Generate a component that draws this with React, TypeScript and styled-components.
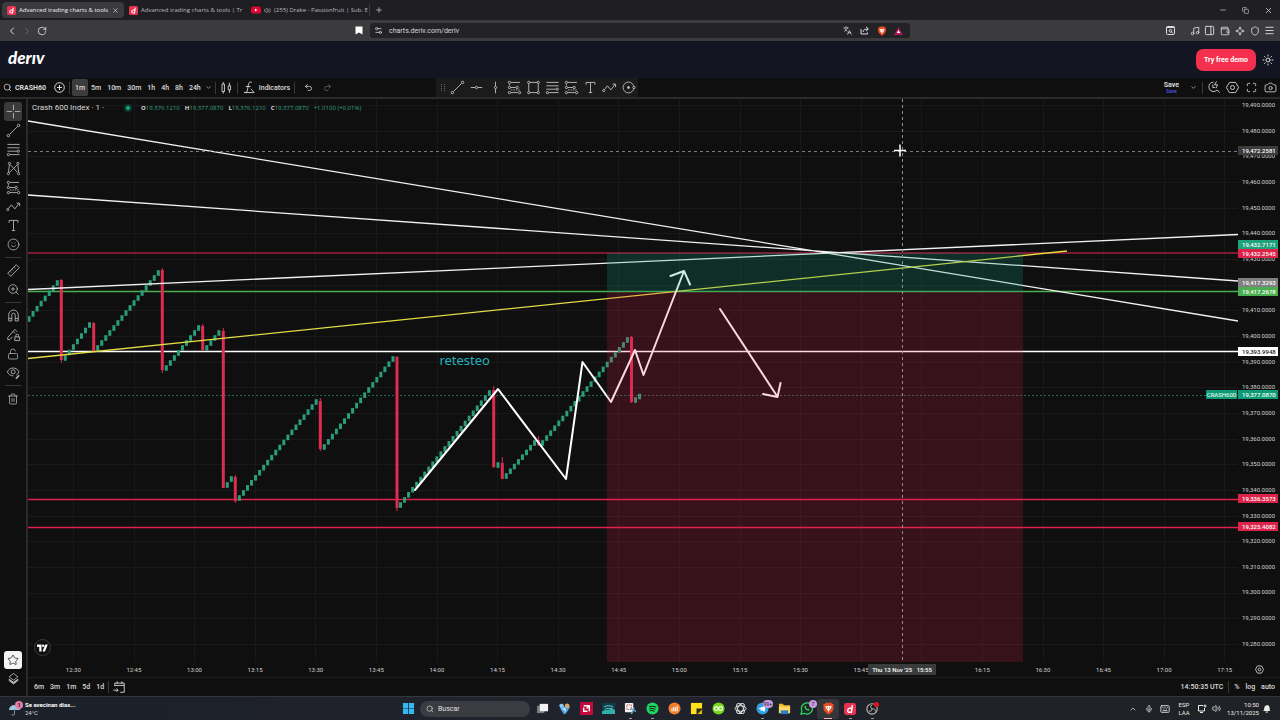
import React from 'react';
import styled, { createGlobalStyle, css } from 'styled-components';
import {
  ChevronDown, ChevronLeft, ChevronRight, ChevronUp, Copy, Keyboard, Languages, Menu, Mic, Minus,
  Music, PanelRight, Plus, Redo2, RotateCw, Search, Settings2, Smile, Sparkle, Sun, Trash2, Undo2,
  Volume2, Wallet, X, Camera, Maximize, ZoomIn, Star, Shield, LockOpen,
} from 'lucide-react';

const GlobalStyle = createGlobalStyle`
  * { box-sizing: border-box; }
  body { margin: 0; background: #0f0f0f; }
  button, input { font: inherit; color: inherit; }
  button { border: 0; padding: 0; background: none; cursor: pointer; }
`;

const Page = styled.div`
  display: flex;
  flex-direction: column;
  min-height: 100vh;
  font-family: Roboto, 'Noto Sans', sans-serif;
  font-size: 7px;
  line-height: 10px;
  color: #dbdbdb;
  background: #0f0f0f;
`;

/* ---------- shared parts ---------- */

const IconButton = styled.button<{ $w?: number; $dim?: boolean }>`
  display: flex;
  align-items: center;
  justify-content: center;
  flex: none;
  width: ${(p) => p.$w ?? 15}px;
  height: 15px;
  color: ${(p) => (p.$dim ? '#6b6b6e' : 'inherit')};
`;

const VRule = styled.span<{ $m?: number }>`
  flex: none;
  width: 1px;
  height: 12px;
  margin: 0 ${(p) => p.$m ?? 4}px;
  background: #3a3a3c;
`;

const Spacer = styled.span`
  flex: 1;
`;

const Glyph = styled.svg.attrs({
  viewBox: '0 0 28 28', width: 19, height: 19, fill: 'none', stroke: 'currentColor', strokeWidth: 1.3,
})`
  display: block;
  flex: none;
`;

/* ---------- browser tabs ---------- */

const TabStrip = styled.div`
  display: flex;
  align-items: center;
  height: 20px;
  padding-left: 2px;
  font-family: 'Open Sans', sans-serif;
  font-size: 6px;
  background: #1f1e23;
`;

const Tab = styled.div<{ $active?: boolean }>`
  display: flex;
  align-items: center;
  gap: 3px;
  width: 122px;
  height: 16px;
  padding: 0 5px;
  border-radius: 4px;
  color: ${(p) => (p.$active ? '#f0f0f0' : '#b9b8bc')};
  background: ${(p) => (p.$active ? '#3b3a3e' : 'transparent')};
`;

const TabTitle = styled.span`
  flex: 1;
  min-width: 0;
  white-space: nowrap;
`;

const WindowButtons = styled.div`
  display: flex;
  margin-left: auto;
`;

/* ---------- address row ---------- */

const NavRow = styled.div`
  display: grid;
  grid-template-columns: 1fr minmax(0, 540px) 1fr;
  align-items: center;
  height: 21px;
  background: #3b3a3d;
  color: #dddddf;
`;

const NavSide = styled.div<{ $end?: boolean }>`
  display: flex;
  align-items: center;
  padding: 0 4px;
  ${(p) => p.$end && css`justify-content: flex-end; padding: 0 3px;`}
`;

const AddressBar = styled.div`
  display: flex;
  align-items: center;
  gap: 2px;
  height: 15px;
  padding: 0 4px;
  border-radius: 3px;
  background: #232227;
`;

const AddressInput = styled.input`
  flex: 1;
  min-width: 0;
  padding: 0 4px;
  border: 0;
  outline: 0;
  background: none;
  color: #d6d6d8;
`;

/* ---------- site header ---------- */

const SiteHeader = styled.header`
  display: flex;
  align-items: center;
  height: 37px;
  padding: 0 5px 0 8px;
  background: #131622;
`;

const Logo = styled.a`
  padding-bottom: 3px;
  font-family: Lato, 'Open Sans', sans-serif;
  font-size: 17px;
  line-height: 20px;
  font-weight: 900;
  font-style: italic;
  color: #fff;
  text-decoration: none;
`;

const DemoButton = styled.button`
  height: 22px;
  width: 60px;
  margin: 0 4px 0 auto;
  border-radius: 7px;
  background: #f5304f;
  color: #fff;
  font-weight: 700;
`;

/* ---------- chart toolbar ---------- */

const Toolbar = styled.div`
  display: flex;
  align-items: center;
  height: 21px;
  border-bottom: 2px solid #2b2b2b;
  background: #0f0f0f;
`;

const ToolbarMain = styled.div`
  display: flex;
  align-items: center;
  flex: none;
  width: 436px;
  padding-left: 3px;
`;

const SymbolButton = styled.button`
  display: flex;
  align-items: center;
  gap: 3px;
  width: 49px;
  font-weight: 700;
`;

const FrameButton = styled.button<{ $active?: boolean }>`
  height: 17px;
  padding: 0 3px;
  border-radius: 2px;
  font-weight: 500;
  background: ${(p) => (p.$active ? '#3d3d3d' : 'transparent')};
`;

const IndicatorsButton = styled.button`
  display: flex;
  align-items: center;
  font-weight: 500;
`;

const Favorites = styled.div`
  display: flex;
  align-items: center;
  height: 19px;
  padding-left: 2px;
  background: #1b1b1b;
  color: #c4c4c4;
`;

const SaveButton = styled.button`
  display: flex;
  flex-direction: column;
  align-items: center;
  margin-right: 7px;
  line-height: 7px;
  font-weight: 700;
  small { font-size: 5px; line-height: 5px; color: #4a49d8; }
`;

/* ---------- workspace ---------- */

const Workspace = styled.div`
  display: flex;
  flex: 1;
`;

const DrawTools = styled.nav`
  display: flex;
  flex-direction: column;
  align-items: center;
  flex: none;
  width: 28px;
  padding: 3px 0 8px;
  border-right: 2px solid #2b2b2b;
  color: #b8b8b8;
`;

const ToolButton = styled.button<{ $active?: boolean; $light?: boolean }>`
  display: flex;
  align-items: center;
  justify-content: center;
  flex: none;
  width: 18px;
  height: 19px;
  border-radius: 3px;
  ${(p) => p.$active && css`background: #3a3a3a;`}
  ${(p) => p.$light && css`background: #f4f4f4; color: #222; height: 18px;`}
`;

const HRule = styled.span`
  flex: none;
  width: 17px;
  height: 1px;
  margin: 3px 0;
  background: #363636;
`;

const ChartColumn = styled.main`
  display: flex;
  flex-direction: column;
  flex: 1;
  min-width: 0;
`;

const PlotRow = styled.div`
  display: flex;
  flex: 1;
  min-height: 563px;
`;

const Plot = styled.section`
  position: relative;
  flex: 1;
  min-width: 0;
`;

const PlotSvg = styled.svg`
  position: absolute;
  inset: 0;
  width: 100%;
  height: 100%;
`;

const Legend = styled.div`
  position: relative;
  display: flex;
  align-items: center;
  height: 18px;
  padding-left: 4px;
  font-family: 'Open Sans', sans-serif;
  font-size: 6px;
  white-space: pre;
`;

const LegendTitle = styled.span`
  width: 92px;
  font-family: Roboto, sans-serif;
  font-size: 8px;
`;

const StatusDot = styled.span`
  width: 8px;
  height: 8px;
  margin-right: 9px;
  border: 2px solid #0c3a2c;
  border-radius: 50%;
  background: #17a67c;
`;

const Ohlc = styled.span`
  margin-right: 5px;
  color: #33a587;
  b { font-weight: 700; color: #dbdbdb; }
`;

const Note = styled.span`
  position: absolute;
  left: 34%;
  top: 251px;
  font-family: 'Noto Sans', sans-serif;
  font-size: 13px;
  line-height: 20px;
  color: #22b3bd;
`;

const TvBadge = styled.span`
  position: absolute;
  left: 6px;
  bottom: 6px;
  display: flex;
  align-items: center;
  justify-content: center;
  width: 17px;
  height: 17px;
  border: 1px solid #3b3b3b;
  border-radius: 50%;
  background: #0f0f0f;
`;

const PriceAxis = styled.aside`
  position: relative;
  display: flex;
  flex-direction: column;
  justify-content: space-between;
  flex: none;
  width: 42px;
  padding: 1px 5px 13px 4px;
  font-size: 6px;
  color: #cfcfcf;
`;

const PriceTag = styled.span<{ $at: number; $bg: string; $fg?: string }>`
  position: absolute;
  left: 0;
  top: ${(p) => (p.$at / 563) * 100}%;
  width: 40px;
  height: 9px;
  margin-top: -5px;
  padding-left: 4px;
  line-height: 9px;
  font-weight: 500;
  color: ${(p) => p.$fg ?? '#fff'};
  background: ${(p) => p.$bg};
`;

const SymbolTag = styled.span`
  position: absolute;
  right: 1px;
  top: ${(296 / 563) * 100}%;
  width: 31px;
  height: 9px;
  margin-top: -5px;
  text-align: center;
  font-size: 6px;
  line-height: 9px;
  color: #fff;
  background: #0f9a77;
`;

const TimeAxis = styled.div`
  position: relative;
  display: flex;
  align-items: center;
  height: 15px;
  padding-left: 15px;
  font-size: 6px;
  color: #cfcfcf;
`;

const TimeTicks = styled.div`
  display: grid;
  grid-template-columns: repeat(20, 1fr);
  flex: 1;
  text-align: center;
`;

const TimeTag = styled.span`
  position: absolute;
  left: ${(874 / 1252) * 100}%;
  top: 2px;
  width: 68px;
  height: 11px;
  margin-left: -34px;
  text-align: center;
  line-height: 11px;
  white-space: pre;
  font-weight: 500;
  color: #fff;
  background: #3a3c3b;
`;

const RangeBar = styled.div`
  display: flex;
  align-items: center;
  height: 19px;
  padding: 0 2px 0 3px;
  border-top: 1px solid #1d1d1d;
`;

const RangeButton = styled.button`
  padding: 0 3px;
  font-weight: 500;
`;

/* ---------- desktop taskbar ---------- */

const Taskbar = styled.footer`
  display: grid;
  grid-template-columns: 397px 1fr auto;
  align-items: center;
  height: 24px;
  border-top: 1px solid #34363b;
  background: linear-gradient(90deg, #1b2029, #20222c 40%, #1f2226);
`;

const Weather = styled.div`
  display: flex;
  align-items: center;
  gap: 2px;
  padding-left: 8px;
  font-size: 6px;
  line-height: 8px;
  b { display: block; color: #fff; font-weight: 700; }
`;

const Dock = styled.div`
  display: flex;
  align-items: center;
`;

const SearchBox = styled.label`
  display: flex;
  align-items: center;
  gap: 4px;
  width: 110px;
  height: 16px;
  margin: 0 1px;
  padding: 0 6px;
  border-radius: 8px;
  background: #3a3c42;
  input {
    width: 70px;
    padding: 0;
    border: 0;
    outline: 0;
    background: none;
  }
  input::placeholder { color: #e0e0e0; opacity: 1; }
`;

const AppButton = styled.button<{ $open?: boolean; $active?: boolean }>`
  position: relative;
  display: flex;
  align-items: center;
  justify-content: center;
  width: 22px;
  height: 20px;
  border-radius: 3px;
  background: ${(p) => (p.$active ? '#34363a' : 'none')};
  &::after {
    content: '';
    position: absolute;
    bottom: 0;
    width: ${(p) => (p.$active ? 8 : 3)}px;
    height: 1px;
    background: ${(p) => (p.$active ? '#f0b8b8' : p.$open ? '#9a9a9a' : 'transparent')};
  }
`;

const Badge = styled.span`
  position: absolute;
  top: 1px;
  right: 0;
  min-width: 8px;
  height: 8px;
  padding: 0 1px;
  border-radius: 4px;
  font-size: 5px;
  line-height: 8px;
  text-align: center;
  color: #222;
  background: #c79be0;
`;

const Tray = styled.div`
  display: flex;
  align-items: center;
  padding-right: 7px;
  font-size: 6px;
  line-height: 8px;
  color: #ececec;
`;

const TrayText = styled.span<{ $w: number; $end?: boolean }>`
  width: ${(p) => p.$w}px;
  text-align: ${(p) => (p.$end ? 'right' : 'center')};
`;

/* ---------- drawing-tool glyphs ---------- */

const Cross = () => <Glyph><path d="M14 4v8M14 16v8M4 14h8M16 14h8" /></Glyph>;
const TrendLine = () => (
  <Glyph><circle cx="6.5" cy="21.5" r="1.800" /><circle cx="21.5" cy="6.5" r="1.800" /><path d="M8 20L20 8" /></Glyph>
);
const HLine = () => <Glyph><circle cx="14" cy="14" r="1.7" /><path d="M5.500 14h6.500M16 14h6.500" /></Glyph>;
const VLine = () => <Glyph><circle cx="14" cy="14" r="1.7" /><path d="M14 5.500v6.500M14 16v6.500" /></Glyph>;
const Fib = () => (
  <Glyph>
    <path d="M5 6.500h18M5 11.500h18M5 16.500h14M8.500 21.500H23" /><circle cx="21" cy="16.500" r="1.700" /><circle cx="6.500" cy="21.500" r="1.700" />
  </Glyph>
);
const Pattern = () => (
  <Glyph>
    <path d="M6.500 20L8 8.500M9 8l10.500 11.500M8 20L19.500 8.500M20.500 9l1 10.500" />
    <circle cx="6.500" cy="21.500" r="1.600" /><circle cx="8" cy="6.500" r="1.600" /><circle cx="20.500" cy="6.500" r="1.600" /><circle cx="21.500" cy="21.500" r="1.600" />
  </Glyph>
);
const Position = () => (
  <Glyph>
    <path d="M8.500 6.500H22M8.500 14H16M8.500 21.500H19" /><path d="M6.500 9v3M9 17.700h13" strokeDasharray="2 1.500" />
    <circle cx="6.500" cy="6.500" r="1.700" /><circle cx="6.500" cy="14" r="1.700" /><circle cx="6.500" cy="21.500" r="1.700" />
    <circle cx="18" cy="14" r="1.700" /><circle cx="21.500" cy="21.500" r="1.700" />
  </Glyph>
);
const Rect = () => (
  <Glyph>
    <path d="M8.500 6.500h11M8.500 21.500h11M7 8.500v11M21 8.500v11" />
    <circle cx="7" cy="6.500" r="1.700" /><circle cx="21" cy="6.500" r="1.700" /><circle cx="7" cy="21.500" r="1.700" /><circle cx="21" cy="21.500" r="1.700" />
  </Glyph>
);
const ZigArrow = () => (
  <Glyph><circle cx="5.500" cy="18.500" r="1.600" /><path d="M6.500 17l4.500-5.500 5 6 6.500-8.500M18.500 9H23v4.500" /></Glyph>
);
const TextTool = () => <Glyph><path d="M7.500 10V6.500h13V10M14 6.500v15M11.500 21.500h5" /></Glyph>;
const TargetCircle = () => (
  <Glyph><circle cx="14" cy="14" r="8" /><circle cx="14" cy="14" r="1.500" fill="currentColor" /><circle cx="22" cy="14" r="1.700" fill="#1b1b1b" /></Glyph>
);
const RulerTool = () => (
  <Glyph><path d="M5.500 18L18 5.500l4.500 4.500L10 22.500zM8.500 15l2 2M11.500 12l2 2M14.500 9l2 2" /></Glyph>
);
const Magnet = () => (
  <Glyph><path d="M7 22V13a7 7 0 0114 0v9h-4.500v-9a2.500 2.500 0 00-5 0v9zM7 18.500h4.500M16.500 18.500H21" /></Glyph>
);
const PenLock = () => (
  <Glyph><path d="M5.500 18.500L16 6.500l3.500 3.500M5.500 18.500v3h3l4-4M13.500 9.500l3 3M16 17.500h7V23h-7zM17.500 17.500V15.500a2 2 0 014 0v2" /></Glyph>
);
const EyePen = () => (
  <Glyph>
    <path d="M5 13c3-7.500 14-7.500 17 0-1 2.500-2.500 4-4 4.800M5 13c1.500 4 5 6 9 6" /><circle cx="13.500" cy="13" r="3" />
    <path d="M17.500 23l5-5" strokeWidth={2.200} />
  </Glyph>
);
const Candles = () => (
  <Glyph><path d="M7.500 9H11v11H7.500zM9.300 6v3M9.300 20v3M16.500 11.500H20v6h-3.500zM18.300 7v4.500M18.300 17.500V22" /></Glyph>
);
const Fx = () => (
  <Glyph><path d="M17.500 6.500c-3-1.500-4.500 0-5 3l-1.500 8c-.500 3-2 4.500-4.500 3.500M8.500 12.500h7M6 21.500h15M16 16l4.500 5" /></Glyph>
);
const HexGear = () => <Glyph><path d="M9.500 6.500h9L23 14l-4.500 7.500h-9L5 14z" /><circle cx="14" cy="14" r="3" /></Glyph>;
const QuickSearch = () => (
  <Glyph><path d="M14 6a7 7 0 105.500 11.500L23 21.500M13 9.500v4.500h3M18.500 5l-3 5h4.500l-2.500 5" /></Glyph>
);
const CalendarGo = () => (
  <Glyph><path d="M7 12V7.500h14V21h-6M7 11h14M10.500 5v4M17.500 5v4M5 18h7M9.500 15.500L12 18l-2.500 2.500" /></Glyph>
);
const ObjectTree = () => (
  <Glyph><path d="M14 6.500l6.500 5-6.500 5-6.500-5z" /><path d="M7.500 15v2l6.500 5 6.500-5v-2L14 19.500z" fill="currentColor" /></Glyph>
);

/* ---------- brand marks ---------- */

const DerivMark = ({ size = 9 }: { size?: number }) => (
  <svg width={size} height={size} viewBox="0 0 14 14">
    <rect width="14" height="14" rx="2.500" fill="#e93152" />
    <path d="M9.800 2.500L8.600 10.800H6.200a1.900 1.900 0 01-1.900-2.300c.2-1.300 1.200-2.300 2.500-2.300h2.300" fill="none" stroke="#fff" strokeWidth="1.700" />
  </svg>
);
const TubeMark = () => (
  <svg width="10" height="8" viewBox="0 0 14 10"><rect width="14" height="10" rx="3" fill="#e0062f" /><path d="M5.500 3v4L9 5z" fill="#fff" /></svg>
);
const BraveMark = ({ size = 10 }: { size?: number }) => (
  <svg width={size} height={size} viewBox="0 0 14 14">
    <path d="M4 .8h6l1 1.400 1.600.3-.3 5.300c-.3 2-2.500 4-5.300 5.800C4.200 11.800 2 9.800 1.700 7.800L1.400 2.500 3 2.200z" fill="#e84b22" />
    <path d="M3.500 4l2 .5L7 4l1.500.5 2-.5-.8 3L8 9l-1 1.800L6 9 4.300 7z" fill="#fff" /><path d="M5.200 6l1.300.8M8.800 6l-1.300.8" stroke="#e84b22" />
  </svg>
);
const App14 = styled.svg.attrs({ viewBox: '0 0 14 14', width: 13, height: 13 })`
  display: block;
`;

const dockApps: { name: string; open?: boolean; active?: boolean; badge?: string; art: React.ReactNode }[] = [
  { name: 'Task view', art: <App14><rect x="1" y="4" width="8" height="8" fill="#77797d" /><rect x="4" y="2" width="9" height="8" fill="#f2f2f2" /></App14> },
  { name: 'Messenger', art: <App14><path d="M1 3l3-1 3 3 3-2 3 2-2 4-3 4H6L3 8z" fill="#4aa5e8" /><circle cx="9.800" cy="4" r="2.500" fill="#e2a35f" /><circle cx="4" cy="4" r="2.200" fill="#8ccaf0" /><path d="M4 7l4-1 1 5z" fill="#b9dcf4" /></App14> },
  { name: 'AMD Software', art: <App14><rect width="14" height="14" fill="#c4093c" /><path d="M4 4h6v6M10 4L7 7M4 6v4h4" stroke="#fff" strokeWidth="1.500" fill="none" /></App14> },
  { name: 'Wallpapers', art: <App14><rect y="1" width="14" height="12" fill="#0d3f4a" /><path d="M0 10c3-2 6-1 8-2s4-1 6 1v4H0z" fill="#2fb0aa" /><path d="M2 5.500c3-2 7-2 10 0M3 8c3-1.500 5-1 8-1" stroke="#7fd5cf" fill="none" /></App14> },
  { name: 'Snipping Tool', open: true, art: <App14><rect x="1" y="1" width="9" height="10" rx="1" fill="#f3f3f3" /><path d="M3 3h5v5H3z" fill="none" stroke="#c84a55" strokeDasharray="1.500 1" /><path d="M7 7l6 3M8 13l3-7" stroke="#67a8cf" strokeWidth="1.500" /></App14> },
  { name: 'Spotify', open: true, art: <App14><circle cx="7" cy="7" r="6.500" fill="#1ed760" /><path d="M3.200 5c3-.9 5.800-.5 7.800.7M3.600 7.300c2.400-.7 4.700-.4 6.600.7M4 9.400c2-.5 3.800-.2 5.300.7" stroke="#15231a" strokeWidth="1.100" fill="none" /></App14> },
  { name: 'Audio mixer', art: <App14><circle cx="7" cy="7" r="6.500" fill="#f07f2c" /><path d="M4.300 10V7M6.200 10V5.500M8.100 10V6M10 10V4" stroke="#fff" strokeWidth="1.200" /></App14> },
  { name: 'Sticky Notes', art: <App14><path d="M1 1h12v12H1z" fill="#ffe21c" /><path d="M13 7H7v6h6z" fill="#2b2a1c" /><path d="M8 13l5-5v5z" fill="#d9b40e" /></App14> },
  { name: 'Owl', art: <App14><circle cx="7" cy="7" r="6.500" fill="#74d81f" /><circle cx="4.700" cy="7" r="2" fill="none" stroke="#fff" strokeWidth="1.200" /><circle cx="9.300" cy="7" r="2" fill="none" stroke="#fff" strokeWidth="1.200" /></App14> },
  { name: 'ChatGPT', art: <App14><g fill="none" stroke="#e8e8e8" strokeWidth="1"><ellipse cx="7" cy="7" rx="6" ry="3" /><ellipse cx="7" cy="7" rx="6" ry="3" transform="rotate(60 7 7)" /><ellipse cx="7" cy="7" rx="6" ry="3" transform="rotate(120 7 7)" /></g></App14> },
  { name: 'Telegram', open: true, badge: '99+', art: <App14><circle cx="7" cy="7" r="6.500" fill="#2f9fe0" /><path d="M2.500 7l8-3.300-1.300 7-2.500-1.800-1.400 1.200-.3-2.200z" fill="#fff" /></App14> },
  { name: 'File Explorer', art: <App14><path d="M1 2h4l1.500 1.500H13V12H1z" fill="#f2b92f" /><path d="M1 5h12v7H1z" fill="#ffda67" /><path d="M3 9h8v4H3z" fill="#2d7fc4" /></App14> },
  { name: 'WhatsApp', badge: '7', art: <App14><path d="M1 13l1-3.500A6 6 0 117 13a6 6 0 01-2.800-.8z" fill="#1c2a22" stroke="#35d366" strokeWidth="1.300" /><path d="M4.800 4.500c-.5 2 2.400 5 4.700 4.800l.7-1.200-1.500-.8-.7.500L6.300 6l.5-.8-.7-1.200z" fill="#35d366" /></App14> },
  { name: 'Brave', open: true, active: true, art: <BraveMark size={13} /> },
  { name: 'Deriv', open: true, art: <DerivMark size={12} /> },
  { name: 'OBS Studio', open: true, art: <App14><circle cx="6.500" cy="7.500" r="5.600" fill="#1d1d1f" stroke="#bdbdbd" strokeWidth="1.200" /><path d="M6.500 7.500c-2-1.500-2-3.500 0-4M6.500 7.500c2.500-.8 4 .8 3.500 2.800M6.500 7.500c0 2.500-2 3-3.500 2" stroke="#bdbdbd" fill="none" /><circle cx="11.300" cy="2.700" r="2.700" fill="#e3121e" /></App14> },
];

/* ---------- chart data ---------- */

const STEP = 4.04;
/* Rising runs of one-minute candles: first x, first y, last y, number of candles. */
const climbs: [number, number, number, number][] = [
  [29.0, 319, 283, 8], [65.3, 358, 325, 7], [97.7, 348, 273, 16], [166.3, 368, 328, 9], [206.8, 348, 333, 4],
  [227.3, 485, 479, 2], [239.4, 498, 402, 20], [324.3, 447, 359, 18], [400.5, 505, 393, 23], [498, 465, 465, 1],
  [506.3, 476, 443, 8], [542.6, 443, 340, 22], [635.5, 400, 396.500, 2],
];
/* Falling candles: x, body top, body bottom, wick top, wick bottom. */
const drops: [number, number, number, number, number][] = [
  [61.3, 280, 360, 279, 363], [93.7, 323, 351, 322, 352], [162.3, 270, 370, 268, 373], [202.7, 326, 350, 324, 351],
  [223.3, 331, 488, 328, 488], [235.3, 477, 501, 475, 503], [320.3, 401, 449, 398, 451], [397, 357, 508, 356, 511],
  [493.7, 390, 467, 386, 468], [502.3, 463, 479, 457, 479], [538.6, 440, 445, 436, 446], [631.5, 337, 402, 336, 403],
];

const prices = Array.from({ length: 22 }, (_, i) => `19,${490 - i * 10}.0000`);
const times = Array.from({ length: 20 }, (_, i) => {
  const m = 750 + i * 15;
  return `${Math.floor(m / 60)}:${String(m % 60).padStart(2, '0')}`;
});
/* The tick that the cursor's time tag stands on is left blank. */
const COVERED_TICK = '16:00';
const tags: { at: number; bg: string; text: string; fg?: string }[] = [
  { at: 52, bg: '#3c3c3c', text: '19,472.2581' }, { at: 146, bg: '#1fa17c', text: '19,432.7171' },
  { at: 155, bg: '#dc2349', text: '19,432.2545' }, { at: 184, bg: '#808080', text: '19,417.3293' },
  { at: 193, bg: '#4bae4f', text: '19,417.2678' }, { at: 253, bg: '#ffffff', fg: '#222', text: '19,393.9948' },
  { at: 296, bg: '#0f9a77', text: '19,377.0870' }, { at: 400, bg: '#dc2349', text: '19,336.3573' },
  { at: 428, bg: '#dc2349', text: '19,325.4082' },
];

const PriceChart = () => (
  <PlotSvg viewBox="28 99 1210 563" preserveAspectRatio="none" fill="none">
    <g stroke="#191919">
      {times.map((t, i) => <path key={t} d={`M${Math.round(73 + i * 60.6) + 0.5} 99v563`} />)}
      {prices.map((p, i) => <path key={p} d={`M28 ${Math.round(105 + i * 25.67) + 0.5}h1210`} />)}
    </g>
    <path d="M28 395.500h1210" stroke="#1b6a56" strokeDasharray="2 2" />
    <path d="M28 253h1210" stroke="#a01f3f" strokeWidth="1.500" />
    <path d="M28 499.500h1210M28 527.500h1210" stroke="#dc2349" strokeWidth="1.300" />
    <path d="M28 291.500h1210" stroke="#4bae4f" strokeWidth="1.300" />
    <path d="M28 351.500h1210" stroke="#fff" strokeWidth="1.500" />
    {climbs.map(([x, y0, y1, n]) =>
      Array.from({ length: n }, (_, i) => {
        const y = n > 1 ? y0 + ((y1 - y0) * i) / (n - 1) : y0;
        return <rect key={`${x}-${i}`} x={x + i * STEP - 1.500} y={y - 2.800} width="3" height="5.600" fill="#2a9d7c" />;
      }),
    )}
    {drops.map(([x, t, b, wt, wb]) => (
      <g key={x} fill="#dc2d50">
        <rect x={x - 1.500} y={t} width="3" height={b - t} /><rect x={x - 0.500} y={wt} width="1" height={wb - wt} />
      </g>
    ))}
    <path d="M28 121L1238 321M28 195L1238 281M28 289.500L1238 234.500" stroke="#f1f1f1" strokeWidth="1.300" />
    <path d="M28 358.500L1067 251" stroke="#e3dc45" strokeWidth="1.300" />
    <g stroke="#fff" strokeWidth="2" strokeLinejoin="round" strokeLinecap="round">
      <path d="M415 490L498 389 566 479 582.500 362 611 402 635 350 643.500 375 684 271M670.500 276L684 271 690 284.500" />
      <path d="M720 309L777 396M763 394L777.500 397 780.500 383" />
    </g>
    <rect x="607" y="253" width="416" height="39" fill="#10a080" fillOpacity=".22" />
    <rect x="607" y="292" width="416" height="370" fill="#f0204c" fillOpacity=".18" />
    <path d="M28 151.500h1210" stroke="#7c7c7c" strokeDasharray="3 3" />
    <path d="M902.500 99v563" stroke="#8f8f8f" strokeDasharray="3 3" />
    <path d="M900 144.500v12M894 150.500h12" stroke="#fff" strokeWidth="1.500" />
  </PlotSvg>
);

const favorites: [string, () => React.ReactElement][] = [
  ['Trend line', TrendLine], ['Horizontal line', HLine], ['Vertical line', VLine], ['Long position', Position],
  ['Rectangle', Rect], ['Fib retracement', Fib], ['Short position', Position], ['Text', TextTool], ['Path', ZigArrow],
  ['Circle', TargetCircle],
];

export default function App() {
  return (
    <Page>
      <GlobalStyle />
      <TabStrip>
        <Tab $active><DerivMark /><TabTitle>Advanced trading charts &amp; tools</TabTitle><IconButton $w={8} aria-label="Close tab"><X size={7} /></IconButton></Tab>
        <Tab><DerivMark /><TabTitle>Advanced trading charts &amp; tools | Tr</TabTitle></Tab>
        <Tab><TubeMark /><Volume2 size={7} /><TabTitle>(255) Drake - Passionfruit | Sub. E</TabTitle></Tab>
        <VRule $m={1} />
        <IconButton aria-label="New tab"><Plus size={8} /></IconButton>
        <WindowButtons>
          <IconButton $w={23} aria-label="Minimize"><Minus size={8} /></IconButton>
          <IconButton $w={23} aria-label="Restore"><Copy size={7} /></IconButton>
          <IconButton $w={23} aria-label="Close"><X size={9} /></IconButton>
        </WindowButtons>
      </TabStrip>

      <NavRow>
        <NavSide>
          <IconButton aria-label="Back"><ChevronLeft size={12} /></IconButton>
          <IconButton $dim aria-label="Forward"><ChevronRight size={12} /></IconButton>
          <IconButton aria-label="Reload"><RotateCw size={10} /></IconButton>
          <Spacer />
          <IconButton aria-label="Bookmark"><svg width="8" height="9" viewBox="0 0 8 9"><path d="M.5.5h7v8L4 6.500.5 8.500z" fill="#fff" /></svg></IconButton>
        </NavSide>
        <AddressBar>
          <Settings2 size={9} />
          <AddressInput aria-label="Address" defaultValue="charts.deriv.com/deriv" />
          <IconButton aria-label="Translate"><Languages size={9} /></IconButton>
          <IconButton aria-label="Share">
            <svg width="9" height="9" viewBox="0 0 9 9" fill="none" stroke="currentColor"><path d="M1 3v5h6.500V6.500M3 6c0-2 1.500-3 5-3M6 .8L8.300 3 6 5.200" /></svg>
          </IconButton>
          <IconButton aria-label="Shields"><BraveMark /></IconButton>
          <IconButton aria-label="Rewards"><svg width="9" height="8" viewBox="0 0 9 8"><path d="M4.500 0L9 8H0z" fill="#b0185c" /><path d="M4.500 3l1.700 3H2.800z" fill="#fff" /></svg></IconButton>
        </AddressBar>
        <NavSide $end>
          <IconButton aria-label="Page search">
            <svg width="9" height="9" viewBox="0 0 9 9" fill="none" stroke="currentColor"><rect x=".5" y=".5" width="8" height="8" rx="1" /><path d="M.5 1.500h8M5.500 6l1.500 1.500" /><circle cx="4.500" cy="4.800" r="1.300" /></svg>
          </IconButton>
          <VRule />
          <IconButton aria-label="Music"><Music size={10} /></IconButton>
          <IconButton aria-label="Sidebar"><PanelRight size={11} /></IconButton>
          <IconButton aria-label="Wallet"><Wallet size={10} /></IconButton>
          <IconButton aria-label="Assistant"><Sparkle size={10} /></IconButton>
          <IconButton aria-label="VPN"><Shield size={10} /></IconButton>
          <IconButton aria-label="Menu"><Menu size={11} /></IconButton>
        </NavSide>
      </NavRow>

      <SiteHeader>
        <Logo href="#" aria-label="deriv">derıv</Logo>
        <DemoButton>Try free demo</DemoButton>
        <IconButton aria-label="Theme"><Sun size={12} /></IconButton>
      </SiteHeader>

      <Toolbar>
        <ToolbarMain>
          <SymbolButton><Search size={9} />CRASH60</SymbolButton>
          <IconButton aria-label="Compare">
            <svg width="11" height="11" viewBox="0 0 11 11" fill="none" stroke="currentColor"><circle cx="5.500" cy="5.500" r="4.800" /><path d="M5.500 3v5M3 5.500h5" /></svg>
          </IconButton>
          <VRule $m={2} />
          {['1m', '5m', '10m', '30m', '1h', '4h', '8h', '24h'].map((f, i) => <FrameButton key={f} $active={i === 0}>{f}</FrameButton>)}
          <IconButton $w={9} aria-label="More intervals"><ChevronDown size={7} /></IconButton>
          <VRule $m={2} />
          <IconButton $w={17} aria-label="Candles"><Candles /></IconButton>
          <VRule $m={2} />
          <IndicatorsButton><Fx />Indicators</IndicatorsButton>
          <VRule $m={4} />
          <IconButton $w={19} aria-label="Undo"><Undo2 size={9} /></IconButton>
          <IconButton $w={19} $dim aria-label="Redo"><Redo2 size={9} /></IconButton>
        </ToolbarMain>
        <Favorites>
          <svg width="10" height="10" viewBox="0 0 10 10" fill="#666"><path d="M3 1h1v1H3zM3 3h1v1H3zM3 5h1v1H3zM3 7h1v1H3zM6 1h1v1H6zM6 3h1v1H6zM6 5h1v1H6zM6 7h1v1H6z" /></svg>
          {favorites.map(([name, Art]) => <IconButton key={name} $w={19} aria-label={name}><Art /></IconButton>)}
        </Favorites>
        <Spacer />
        <SaveButton>Save<small>Save</small></SaveButton>
        <IconButton aria-label="Layouts"><ChevronDown size={7} /></IconButton>
        <VRule $m={1} />
        <IconButton $w={19} aria-label="Quick search"><QuickSearch /></IconButton>
        <IconButton $w={19} aria-label="Settings"><HexGear /></IconButton>
        <IconButton $w={19} aria-label="Fullscreen"><Maximize size={11} strokeWidth={1.800} /></IconButton>
        <IconButton $w={19} aria-label="Snapshot"><Camera size={13} strokeWidth={1.500} /></IconButton>
      </Toolbar>

      <Workspace>
        <DrawTools>
          <ToolButton $active aria-label="Cursor"><Cross /></ToolButton>
          <ToolButton aria-label="Trend line"><TrendLine /></ToolButton>
          <ToolButton aria-label="Fib retracement"><Fib /></ToolButton>
          <ToolButton aria-label="Patterns"><Pattern /></ToolButton>
          <ToolButton aria-label="Forecasting"><Position /></ToolButton>
          <ToolButton aria-label="Brushes"><ZigArrow /></ToolButton>
          <ToolButton aria-label="Text"><TextTool /></ToolButton>
          <ToolButton aria-label="Icons"><Smile size={13} strokeWidth={1.500} /></ToolButton>
          <HRule />
          <ToolButton aria-label="Measure"><RulerTool /></ToolButton>
          <ToolButton aria-label="Zoom in"><ZoomIn size={13} strokeWidth={1.500} /></ToolButton>
          <HRule />
          <ToolButton aria-label="Magnet"><Magnet /></ToolButton>
          <ToolButton aria-label="Keep drawing"><PenLock /></ToolButton>
          <ToolButton aria-label="Lock drawings"><LockOpen size={12} strokeWidth={1.500} /></ToolButton>
          <ToolButton aria-label="Hide drawings"><EyePen /></ToolButton>
          <HRule />
          <ToolButton aria-label="Remove"><Trash2 size={12} strokeWidth={1.500} /></ToolButton>
          <Spacer />
          <ToolButton $light aria-label="Favorites"><Star size={12} strokeWidth={1.500} /></ToolButton>
          <ToolButton aria-label="Object tree"><ObjectTree /></ToolButton>
        </DrawTools>

        <ChartColumn>
          <PlotRow>
            <Plot>
              <PriceChart />
              <Legend>
                <LegendTitle>Crash 600 Index · 1 ·</LegendTitle>
                <StatusDot />
                <Ohlc><b>O</b>19,376.1210</Ohlc>
                <Ohlc><b>H</b>19,377.0870</Ohlc>
                <Ohlc><b>L</b>19,376.1210</Ohlc>
                <Ohlc><b>C</b>19,377.0870</Ohlc>
                <Ohlc>+1.0100 (+0.01%)</Ohlc>
              </Legend>
              <Note>retesteo</Note>
              <TvBadge><svg width="11" height="8" viewBox="0 0 22 14" fill="#fff"><path d="M0 0h9v14H4.500V5H0zM21.500 0L16 14h-5L14 6.500 16.500 0z" /><circle cx="12.300" cy="2.400" r="2.400" /></svg></TvBadge>
              <SymbolTag>CRASH600</SymbolTag>
            </Plot>
            <PriceAxis>
              {prices.map((p) => <span key={p}>{p}</span>)}
              {tags.map((t) => <PriceTag key={t.text} $at={t.at} $bg={t.bg} $fg={t.fg}>{t.text}</PriceTag>)}
            </PriceAxis>
          </PlotRow>
          <TimeAxis>
            <TimeTicks>{times.map((t) => <span key={t}>{t === COVERED_TICK ? null : t}</span>)}</TimeTicks>
            <IconButton $w={25} aria-label="Axis settings">
              <svg width="9" height="9" viewBox="4 4 20 20" fill="none" stroke="currentColor" strokeWidth="2" transform="translate(-8 0)"><path d="M9.500 6h9l4.500 8-4.500 8h-9L5 14z" /><circle cx="14" cy="14" r="3" /></svg>
            </IconButton>
            <TimeTag>{"Thu 13 Nov '25   15:55"}</TimeTag>
          </TimeAxis>
          <RangeBar>
            {['6m', '3m', '1m', '5d', '1d'].map((r) => <RangeButton key={r}>{r}</RangeButton>)}
            <VRule $m={1} />
            <IconButton $w={19} aria-label="Go to date"><CalendarGo /></IconButton>
            <Spacer />
            <RangeButton>14:50:35 UTC</RangeButton>
            <VRule $m={2} />
            <RangeButton>%</RangeButton>
            <RangeButton>log</RangeButton>
            <RangeButton>auto</RangeButton>
          </RangeBar>
        </ChartColumn>
      </Workspace>

      <Taskbar>
        <Weather>
          <svg width="15" height="16" viewBox="0 0 15 16">
            <path d="M1 9a5.500 5 0 0111 0z" fill="#9cc7e6" /><path d="M6.500 8v5a1.300 1.300 0 01-2.600 0" fill="none" stroke="#6f8ea8" />
            <circle cx="11" cy="4" r="4" fill="#e87ba0" /><path d="M10.300 3l1-.8v4" stroke="#222" strokeWidth=".8" fill="none" />
          </svg>
          <span><b>Se avecinan días...</b>24°C</span>
        </Weather>
        <Dock>
          <AppButton aria-label="Start"><App14><g fill="#35b8f1"><path d="M1 1h5.600v5.600H1zM7.400 1H13v5.600H7.400zM1 7.400h5.600V13H1zM7.400 7.400H13V13H7.400z" /></g></App14></AppButton>
          <SearchBox><Search size={8} /><input aria-label="Buscar" placeholder="Buscar" /></SearchBox>
          {dockApps.map((a) => (
            <AppButton key={a.name} $open={a.open} $active={a.active} aria-label={a.name}>
              {a.art}{a.badge && <Badge>{a.badge}</Badge>}
            </AppButton>
          ))}
        </Dock>
        <Tray>
          <IconButton $w={16} aria-label="Hidden icons"><ChevronUp size={8} /></IconButton>
          <IconButton $w={16} aria-label="Microphone"><Mic size={8} /></IconButton>
          <IconButton $w={16} aria-label="Keyboard"><Keyboard size={10} /></IconButton>
          <TrayText $w={22}>ESP<br />LAA</TrayText>
          <IconButton $w={15} aria-label="Network">
            <svg width="9" height="9" viewBox="0 0 9 9" fill="none" stroke="currentColor"><path d="M5 1.500H.5v5.500h6V4M2 8.500h3M7 .5v3M5.500 2h3" /></svg>
          </IconButton>
          <IconButton $w={12} aria-label="Volume"><Volume2 size={9} /></IconButton>
          <TrayText $w={37} $end>10:50<br />13/11/2025</TrayText>
          <IconButton $w={14} aria-label="Notifications">
            <svg width="9" height="9" viewBox="0 0 9 9" fill="currentColor"><path d="M1 7c1.500-1 1-2.500 1.500-4C3 1.500 5 1 6.500 1.500 8 2.500 7.500 5 8 7zM3.500 7.500h2.500a1.200 1.200 0 01-2.500 0z" /></svg>
          </IconButton>
        </Tray>
      </Taskbar>
    </Page>
  );
}
